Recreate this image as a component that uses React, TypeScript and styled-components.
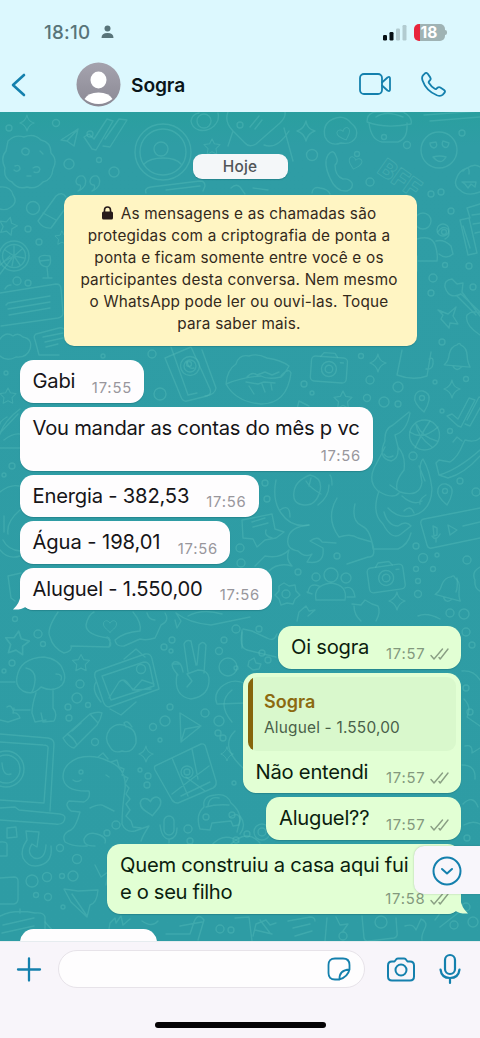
import React from 'react';
import styled, { createGlobalStyle } from 'styled-components';

const GlobalStyle = createGlobalStyle`
  * { box-sizing: border-box; }
  body { margin: 0; background: #f8f5fa; font-family: Inter, "Liberation Sans", sans-serif; }
`;

const ACCENT = '#1480ad';

const Screen = styled.div`
  width: 480px;
  height: 1038px;
  display: grid;
  grid-template-rows: 112px 829px 97px;
  overflow: hidden;
`;

/* ---------- header ---------- */
const Header = styled.header`
  background: #dcf8fe;
  display: flex;
  flex-direction: column;
`;
const StatusBar = styled.div`
  height: 57px;
  padding: 7px 34px 0 44px;
  display: flex;
  align-items: center;
`;
const Clock = styled.span`
  font-size: 18.8px;
  font-weight: 500;
  letter-spacing: 0.2px;
  color: #587479;
  width: 47px;
  white-space: nowrap;
`;
const PersonIcon = styled.svg`
  margin-left: 10px;
`;
const StatusIcons = styled.div`
  margin-left: auto;
  display: flex;
  align-items: center;
  gap: 7px;
`;
const Battery = styled.div`
  width: 31px;
  height: 17px;
  border-radius: 5px;
  background: linear-gradient(90deg, #e8253b 0 6.5px, #9fb3b4 6.5px);
  color: #fff;
  font-weight: 700;
  font-size: 15.5px;
  line-height: 17px;
  text-align: center;
`;
const BatteryTip = styled.div`
  width: 2px;
  height: 5px;
  margin-left: -6.5px;
  margin-right: -1px;
  border-radius: 0 2px 2px 0;
  background: #9fb3b4;
`;
const NavBar = styled.div`
  height: 55px;
  padding: 0 34px 0 11px;
  display: flex;
  align-items: center;
`;
const Avatar = styled.svg`
  margin-left: 50px;
`;
const ContactName = styled.h1`
  margin: 1px 0 0 10px;
  font-size: 19.2px;
  font-weight: 600;
  letter-spacing: -0.1px;
  color: #0a1519;
`;
const Calls = styled.div`
  margin-left: auto;
  margin-bottom: 1px;
  display: flex;
  align-items: center;
  gap: 30px;
`;

/* ---------- conversation ---------- */
const Chat = styled.main`
  display: grid;
  overflow: hidden;
  background: linear-gradient(#2a9f9f 0, #2f9da5 34px, #2e9ca4 100%);
  position: relative;
  & > * { grid-area: 1 / 1; }
`;
const Wallpaper = styled.svg`
  display: block;
`;
const Thread = styled.div`
  z-index: 1;
  height: 829px;
  overflow: hidden;
  padding: 41.5px 19.5px 0;
  display: flex;
  flex-direction: column;
`;
const DatePill = styled.div`
  flex: none;
  align-self: center;
  width: 95px;
  height: 25px;
  border-radius: 9px;
  background: #f4f7f9;
  color: #505558;
  font-size: 15.4px;
  font-weight: 500;
  letter-spacing: 0.2px;
  line-height: 25.5px;
  text-align: center;
  box-shadow: 0 1px 1px rgba(0, 60, 70, 0.25);
`;
const Notice = styled.div`
  flex: none;
  align-self: center;
  width: 353px;
  height: 151px;
  margin: 16px 0 14.4px;
  padding: 8px 2px 0 0;
  border-radius: 10px;
  background: #fff5c3;
  color: #33291b;
  text-align: center;
  box-shadow: 0 1px 1px rgba(0, 60, 70, 0.2);
`;
const NoticeLine = styled.div`
  height: 22.2px;
  line-height: 22.2px;
  font-size: 15.3px;
  letter-spacing: 0.21px;
  white-space: nowrap;
`;
const LockIcon = styled.svg`
  margin-right: 8px;
  vertical-align: -1px;
`;
const Bubble = styled.div<{ $out?: boolean; $w: number; $h: number; $gap?: number }>`
  position: relative;
  isolation: isolate;
  flex: none;
  align-self: ${p => (p.$out ? 'flex-end' : 'flex-start')};
  width: ${p => p.$w}px;
  height: ${p => p.$h}px;
  margin-bottom: ${p => p.$gap ?? 4}px;
  border-radius: 13.5px;
  background: ${p => (p.$out ? '#e2ffd4' : '#fefdfe')};
  color: ${p => (p.$out ? '#0b1e0e' : '#161518')};
  box-shadow: 0 1px 1px rgba(0, 60, 70, 0.22);
  padding: 0 13px;
  display: flex;
  flex-direction: column;
`;
const Line = styled.div<{ $ls?: number; $h?: number }>`
  height: ${p => p.$h ?? 42}px;
  line-height: ${p => p.$h ?? 42}px;
  font-size: 20.2px;
  letter-spacing: ${p => p.$ls ?? -0.24}px;
  white-space: nowrap;
`;
const Meta = styled.div<{ $out?: boolean }>`
  position: absolute;
  right: 12px;
  bottom: 5px;
  display: flex;
  align-items: center;
  gap: 4px;
  font-size: 14.8px;
  line-height: 20px;
  letter-spacing: 0.8px;
  color: ${p => (p.$out ? '#83987d' : '#98969c')};
`;
const Tail = styled.svg<{ $out?: boolean }>`
  position: absolute;
  z-index: -1;
  bottom: 0;
  ${p => (p.$out ? 'right: -7px; transform: scaleX(-1);' : 'left: -7px;')}
`;
const Quote = styled.div`
  margin: 4.5px -8px 0;
  height: 73.5px;
  border-radius: 9px;
  background: linear-gradient(90deg, #86650c 5.5px, #d9f8cc 5.5px);
  padding: 11px 0 0 16.5px;
`;
const QuoteName = styled.div`
  font-size: 18px;
  font-weight: 600;
  line-height: 28px;
  color: #8c6a10;
`;
const QuoteText = styled.div`
  font-size: 15.4px;
  line-height: 24px;
  letter-spacing: 0.2px;
  color: #495f49;
`;
const ScrollDown = styled.button`
  position: absolute;
  z-index: 2;
  right: 0;
  top: 734px;
  width: 66px;
  height: 48px;
  padding: 1px 1px 0 0;
  border: 0;
  border-radius: 10px 0 0 10px;
  background: #f8f6fb;
  box-shadow: 0 0 2px rgba(60, 80, 80, 0.35);
  display: grid;
  place-items: center;
`;

/* ---------- composer ---------- */
const Footer = styled.footer`
  background: #f8f5fa;
  border-top: 1px solid #e6ecef;
  display: flex;
  flex-direction: column;
  align-items: center;
`;
const Composer = styled.div`
  width: 100%;
  height: 54px;
  padding: 0 17px 0 15px;
  display: flex;
  align-items: center;
`;
const Input = styled.div`
  width: 307px;
  height: 38px;
  margin: 0 22px 0 16px;
  padding-right: 13px;
  border-radius: 19px;
  border: 1px solid #e7e3e9;
  background: #fefdfe;
  display: flex;
  align-items: center;
  justify-content: flex-end;
`;
const MicIcon = styled.svg`
  margin-left: 24px;
`;
const HomeIndicator = styled.div`
  width: 171px;
  height: 6px;
  margin-top: 26px;
  border-radius: 3px;
  background: #050305;
`;

const stroke = { fill: 'none', stroke: ACCENT, strokeWidth: 2, strokeLinecap: 'round', strokeLinejoin: 'round' } as const;

const Ticks = () => (
  <svg width="19" height="12" viewBox="0 0 19 12" fill="none" stroke="#8a9f84" strokeWidth="1.4" strokeLinecap="round" strokeLinejoin="round">
    <path d="M1 7.500 4 11 12.500 1M9 9.500 10.200 11 18 1" />
  </svg>
);

const Star = ({ x, y, r = 9, a = 0 }: { x: number; y: number; r?: number; a?: number }) => (
  <path transform={`translate(${x} ${y}) rotate(${a}) scale(${r / 10})`} d="M0-10 3-4 10-3 5 2 6 9 0 6-6 9-5 2-10-3-3-4Z" />
);
const Spark = ({ x, y, r = 9 }: { x: number; y: number; r?: number }) => (
  <path transform={`translate(${x} ${y}) scale(${r / 10})`} d="M0-10Q1-2 9 0Q2 2 0 10Q-2 2-9 0Q-2-2 0-10Z" />
);
const Heart = ({ x, y, r = 9, a = 0 }: { x: number; y: number; r?: number; a?: number }) => (
  <path transform={`translate(${x} ${y}) rotate(${a}) scale(${r / 10})`} d="M0 9C-4 5-11 1-9-5C-7-9-2-8 0-4C2-8 7-9 9-5C11 1 4 5 0 9Z" />
);
const Bell = ({ x, y, a = 0 }: { x: number; y: number; a?: number }) => (
  <path transform={`translate(${x} ${y}) rotate(${a})`} d="M-13 9Q-9 5-9-2Q-8-10-2-12Q0-15 2-12Q8-10 9-2Q10 5 13 9ZM-4 10Q0 15 4 10" />
);
const Camera = ({ x, y, a = 0 }: { x: number; y: number; a?: number }) => (
  <g transform={`translate(${x} ${y}) rotate(${a})`}>
    <rect x="-18" y="-11" width="36" height="25" rx="4" />
    <path d="M-9-11-6-15H5L8-11M11-6h3" />
    <circle r="7.5" cy="1" /><circle r="3.8" cy="1" />
  </g>
);
const Pin = ({ x, y }: { x: number; y: number }) => (
  <g transform={`translate(${x} ${y})`}>
    <path d="M2 12Q-9 3-7-4Q-5-10 1-9Q8-7 7 0Q6 6 2 12Z" /><circle r="2.5" cy="-2" />
  </g>
);
const Checks = ({ x, y }: { x: number; y: number }) => (
  <path transform={`translate(${x} ${y})`} d="M-20 5-15 3-9 8 2-13 8-11-6 16-9 15ZM0 9 12-14 18-12 3 15-2 13" />
);

const DOTS: [number, number, number][] = [
  [9, 128, 3], [56, 123, 3.5], [90, 134, 3], [69, 164, 5], [114, 172, 5], [99, 160, 2.5], [312, 155, 5.5], [357, 154, 2.5],
  [407, 145, 3.5], [370, 182, 4], [384, 137, 2.5], [441, 192, 3], [431, 194, 3], [451, 211, 3], [444, 232, 2.5], [33, 208, 6.5],
  [28, 229, 3], [39, 242, 3], [17, 281, 4], [28, 283, 3], [433, 278, 4], [431, 293, 3], [445, 265, 2.5], [469, 266, 3], [473, 287, 3],
  [442, 342, 3], [435, 382, 2], [466, 379, 2.5], [370, 380, 4], [361, 356, 2.5], [304, 384, 3], [312, 393, 2], [367, 398, 3.5],
  [384, 402, 5], [398, 404, 3], [398, 387, 5], [442, 411, 2], [450, 431, 2.5], [413, 456, 4], [460, 481, 3], [476, 492, 4],
  [12, 466, 3], [4, 475, 2], [6, 373, 2], [240, 548, 4], [241, 563, 4], [298, 572, 3], [337, 556, 3], [416, 546, 3], [423, 558, 4.5],
  [437, 555, 2], [467, 560, 4], [416, 569, 2.5], [433, 569, 2.5], [418, 581, 2.5], [418, 594, 3.5], [450, 613, 4], [464, 614, 5],
  [15, 619, 2.5], [38, 634, 4], [43, 644, 2.5], [12, 663, 3], [4, 671, 2], [80, 684, 4], [77, 698, 5], [68, 707, 3], [88, 705, 2.5],
  [69, 718, 3], [164, 647, 3], [172, 640, 3], [171, 651, 2], [224, 640, 3], [219, 651, 3.5], [228, 667, 9], [170, 707, 3], [165, 721, 5],
  [153, 727, 3.5], [205, 713, 4], [219, 721, 5], [218, 733, 3], [223, 738, 3], [160, 740, 2], [95, 742, 3.5], [140, 770, 2],
  [148, 776, 3], [147, 785, 3], [234, 783, 2], [60, 848, 3.5], [77, 859, 4.5], [47, 877, 4.5], [73, 876, 5], [62, 876, 2.5],
  [32, 881, 6], [36, 895, 2.5], [48, 897, 3.5], [63, 907, 2], [116, 825, 4], [107, 833, 3], [188, 829, 4], [190, 841, 3], [220, 929, 4],
  [231, 930, 3], [236, 840, 3], [247, 834, 3], [466, 632, 4], [472, 645, 3], [470, 712, 3], [466, 688, 3], [475, 850, 3], [467, 838, 3],
  [466, 907, 4], [473, 922, 5], [454, 925, 4], [343, 936, 4], [236, 668, 2], [262, 653, 3], [268, 660, 3], [236, 629, 4], [259, 629, 3],
  [152, 354, 4], [189, 364, 2.5], [103, 356, 2], [160, 394, 6], [240, 125, 3], [462, 133, 3], [267, 499, 3], [265, 483, 3],
];

const Doodles = () => (
  <Wallpaper width="480" height="829" viewBox="0 112 480 829" fill="none" stroke="#55bab9" strokeOpacity=".44" strokeWidth="1.4" strokeLinecap="round" strokeLinejoin="round">
    {DOTS.map(([x, y, r], i) => <circle key={i} cx={x} cy={y} r={r} />)}

    <Spark x={27} y={123} r={8} />
    <path d="M61 140 78 129 74 146 67 141ZM67 141 78 129" />
    <path d="M84 137 89 134 94 139 107 119 113 121 96 150 92 149ZM105 139 119 119 127 120 110 147 103 146" />
    <circle cx="163" cy="152" r="28" /><circle cx="163" cy="152" r="23" /><circle cx="161" cy="149" r="7" />
    <path d="M144 164Q150 158 163 158Q176 158 181 164" />
    <path d="M8 141Q15 134 24 137Q34 133 41 140Q51 142 51 153Q58 160 53 169Q52 180 43 182Q36 190 27 187Q18 190 12 182Q3 178 5 168Q0 158 6 151Z" />
    <path d="M22 150q3-4 7 0q1 5-4 5q-4-1-3-5M15 166q5-2 5 3q-3 4-6 1M33 168q5-3 7 1q-1 5-6 3M40 151l3 3M27 176h4" />
    <path d="M76 181q1-6 7-5q4 3 2 9q-3 5-7 6q4-3 2-6q-4 0-4-4M90 181q1-6 7-5q4 3 2 9q-3 5-7 6q4-3 2-6q-4 0-4-4" />
    <path d="M191 121q1-7 8-8M218 113q2 7-4 13q-7 6-15 4q-7-2-8-9" /><circle cx="204" cy="121" r="7" />
    <path d="M228 112q-4 10 5 19l12 12q4 5 11 1l24-21q6-6 5-11M284 128l9 33M233 131l-5 15M250 127l9-11M255 129l7-9M264 145q13 5 25-14" />
    <Star x={212} y={147} r={8} />
    <Spark x={306} y={131} r={10} />
    <path d="M325 137q-3-13 8-18q11-5 18 4q8 6 5 14q-4 8-15 6q-11 4-16-6Z" /><Heart x={344} y={134} r={7} a={-20} />
    <path d="M367 122q0-10 10-10h26q10 5 8 12M367 122q18 7 44 2M369 123q2 17 13 19h16q10-3 9-19M376 117q10-7 27 0" />
    <circle cx="439" cy="150" r="18" />
    <path d="M430 143l6-1q2 5-2 6q-4-1-4-5M443 141l6 2q-1 6-5 4q-3-2-1-6M433 157q7-2 13 0q-5 9-13 0M424 115l56-4M430 121l50-4" />
    <path d="M328 155q5-7 8 1q3 6-1 9q0 11 8 14q6-1 9 4q2 5-5 8q-11 1-17-13q-7-15-2-23Z" /><Heart x={355} y={163} r={7} a={15} />
    <text x="376" y="172" fontSize="25" fontWeight="800" fontFamily="Inter" transform="rotate(35 376 172)" strokeWidth="1">BFF</text>
    <path d="M456 180q2-9 11-12q8-5 13-1M480 192q-13 5-20-2q-6-4-4-10M463 171q7-7 6 3M462 182h14l-1 5-4-3-3 4-3-4Z" />

    <path d="M146 193q-2-5 5-6l49-6q5 0 5 5l-2 5M166 190l34-4M231 188q5-5 9-1l5 7M312 193q1-7 8-5q8 1 10 6M253 188l15 2" />
    <path d="M0 187q11-1 13 8q5 7-2 12q-5 4-11 2" />
    <path d="M38 221 56 196q6-5 10 1M38 221q5 8 13 7l16-22M43 213l13 7" />
    <Star x={8} y={226} r={9} a={15} /><Star x={62} y={238} r={7} />
    <circle cx="14" cy="256" r="15" /><circle cx="14" cy="256" r="11.5" />
    <path d="M14 256V246M14 256l8-7M14 256l10 2M14 256l6 9M14 256l-2 10M14 256l-9 5M14 256l-9-6M12 258-3 278M10 256-3 268" />
    <path d="M39 258q2-4 11-2q2 9-3 11q-8-1-8-9M47 267l1 10M43 278h9M40 261l9-1" />
    <path d="M0 293l56-9q5 0 5 5l2 24q0 4-5 5l-57 8M8 303l42-7M8 309l42-7M9 315l41-7M8 303l-2 2M5 289q2-4 6-4" />
    <path d="M36 334l23-6q4-1 6 2M36 334q-3 2-1 6l4 15h20M43 337l20-4M45 342l18-4M46 347l12-3" />
    <path d="M0 339q6-8 13-3q5-4 10 1q10 2 7 12q-3 9-14 8q-9 5-16-1" />
    <Star x={8} y={396} r={8} /><path d="M0 433l18-19M20 409q-16 12-20 25M4 440q9-7 16-6M0 448h20M7 417q-7 4-7 7" />
    <path d="M0 492q10-8 19-6M8 534q-2-12 12-24M3 540q5 10 17 11M0 550q8 10 20 6M8 576l13-3M8 576l3 22 4 3M4 516v16" />

    <circle cx="423" cy="221" r="8" /><path d="M417 239q16-5 19 9q2 8 1 13H417M438 232q4-7 10-3q3 7-3 10M436 241q8-2 15 5l2 8q-7 6-14 0M417 256v15" />
    <circle cx="443" cy="230" r="6" />
    <path d="M460 220l9-2 8 35-9 2ZM463 226l7 22M480 204l-13 4 3 10M480 214l-8 1M480 223l-7 1M480 232l-5 1" />
    <path d="M445 287q-1-7 7-8l5 5 6-1-1 9 18 24M445 287q4 13 16 7l19 18M457 296l19 19M467 315q-3 9 13 20M467 315q5-5 13-2" />
    <path d="M438 310l10 4 8-7-3 9 5 8-8-1-1 5-8-9 2-4Z" />
    <Bell x={458} y={357} a={5} />
    <Spark x={452} y={389} r={9} /><Checks x={467} y={411} />
    <circle cx="424.500" cy="435" r="15" />
    <path d="M410 432q12 9 28-5M416 424q1 12 16 23M430 421q-7 10-15 27M437 441q-15-4-20-16" />
    <path d="M436 463l3-3 11 2q8-5 13-18l2-4q10 3 15-2M436 463l3 12 9 3q16-4 32-22M439 475q18-5 41-25M453 442l4-5 5 4" />
    <Pin x={445} y={493} />
    <path d="M480 508l-56 11q-4 1-3 5l6 21q1 4 5 3l48-10M433 526l4 2v7l-3 1ZM432 536q4 6 8-2M436 538v4M448 525l9 5-7 5ZM463 526l17-4" />
    <Bell x={450} y={589} a={15} /><path d="M457 578q1 9-1 14" /><path d="M480 567q-9 5-5 13q-1 8 5 11" />

    <path d="M165 358l26-11 19 42q2 5-3 7l-20 5q-4 1-6-4Z" /><circle cx="190" cy="366" r="9.500" /><circle cx="190" cy="366" r="6" /><path d="M187 362q2 8 7 6" />
    <path d="M171 347l17 48M205 396q10-1 11-8l-14-38M188 395l9-2" />
    <path d="M226 384q1-14 10-20q3-10 13-8q8-3 18 2q14 2 22 8q-5 9-8 11q-13 3-20-1q-18 1-35 8ZM226 384q10 18 35 20q26 0 30-31q-2-6-10 3M247 377q5-6 10-2l8-3 7 3 7-3M246 382l12 2 6-2 11 1M249 386l5 8M262 384l3 8M271 384l1 6" />
    <Camera x={329} y={368} a={4} /><Spark x={378} y={363} r={9} /><Star x={343} y={400} r={9} /><path d="M297 409l2-8 10 5" />
    <path d="M402 350l-5 25q16 6 30 1l4-24M429 359q5-3 4 5q-1 6-7 5" /><Pin x={422} y={400} />

    <path d="M385 441q-1-12 8-16l16-13M385 441q-8 17 6 20q8-2 7-14l-3-12q12-4 15-22M398 447q8 9 6 23q-9 11-7 19M385 447q-6 12-11 21q-6 14 4 23q15 9 21 2M379 491q-8 22 4 33q9 17 18 10l10-8q-5-6-13 0q-10 0-14-14" />
    <path d="M390 485l10 7q20 6 22-10q-4-18 1-23q7 12 9 30q-1 24-22 27-13 2-22-8M402 496q11 10 20 5M384 454q3 5 9 2M419 466l6 15M426 495q-7 4-6 9M404 511q6-7 10 2" />
    <path d="M276 480q-4 20 5 33q10 15 28 12M294 492q1-11 16-17q13 3 10 16q-4 15-16 14q-12-1-10-13ZM306 481q4 7 15 13M311 478l-2 8M329 485q0 12-11 20M330 475q2 2 2 10M280 510q10-7 10 7M337 498q-12 20 2 39q12-4 19 1l14 4q5 16-4 15l-21 7M355 504q-4 17 7 22q9 4 11 23h25q10-4 13-16" />
    <path d="M309 525q-20 2-21 14q-2 10 10 12q7 7 14 3l-5 8q18 3 16-14l-13-7q8-6 12 1l14 1M242 520l30-6 3 15 9 3-8 6-11 2-8 7-4-8-10-1ZM252 522l13-4M253 527l15-4M266 530q-2 6 6 8" />
    <path d="M255 566l10-10q15 3 24-6q-4 9 3 16-14-4-23 5" />
    <circle cx="331" cy="575" r="7" /><circle cx="316" cy="577" r="4" /><circle cx="346" cy="578" r="5" />
    <path d="M316 600q-3-15 15-17q17 2 14 17ZM308 593q1-11 11-7M345 588q8-3 10 9h-8M312 594l-5-2" />
    <Camera x={386} y={577} a={-8} /><Spark x={397} y={601} r={9} />
    <path d="M284 583l5 3 6-1 1 6 4 4-5 4-2 5-6-1-6 2-2-6-4-4 4-4v-5Z" /><circle cx="286" cy="594" r="4" />
    <path d="M352 604l9 1 4-5 7 4 6 2q3 6-2 15M354 606q0 9 7 15M297 621l2-9 7-6 3 5 6-1-7 6M418 616q9-4 22 3" />

    <Star x={17} y={643} r={12} a={8} />
    <path d="M58 612q-12 18-8 25q3 11 14 16q9-2 7-7l38 1q4-2-1-9q-22-3-22-13q2-10 8-13M109 647q3-9-2-10M133 612q9 11 7 19q-16 1-25 9q1 7 9 6l16-7q6 2 15-1q2-4 6-13q9-4 4-12M147 613q2 7 8 7" />
    <Heart x={110} y={626} r={7} />
    <path d="M176 613q13 10 35 12l39-8M188 616q15-8 34-2M176 613l5 8-4 7-2-8" />
    <path d="M17 677q3-19 27-20q15 2 19 13q4 9-1 15q-9 8-21 2q-8 9-18 4q-8-5-6-14ZM26 668q10 2 9 13q-1 9-4 12M56 674q7 0 5 6M53 689v19q5 6 1 13l-11 1-2-9M36 693q-4 12-4 20l3 9 11-2M0 682h15M0 720l8 2 12-4q-2-6-7-5l1-5M14 710h16M7 707q4-3 6 3" />
    <Star x={81} y={663} r={8.500} />
    <path d="M97 671l48-17q6-1 7 5l7 30-50 18q-4 0-6-6l-8-24q-1-5 2-6ZM102 676l42-14q5 0 6 5l4 19-43 14ZM109 698l10-16q4-4 8 0l6 8 9-10 12 4M124 681l10 9 17-1M124 659l12-10 9 8M110 709l11 6 15-13M96 682q-5 8 5 20" /><circle cx="141" cy="669" r="4.500" />
    <path d="M188 672l-4-28q2-5 7-3l5 24M197 665l2-20q4-5 7 0l-2 28M178 675q-9-10-4-13q7-2 9 10M177 674q-4 22 14 25q19-3 18-21q-1-8-11-8l-11 4 5 7-5 6M172 664h8" />
    <path d="M217 704q-4-9 4-17q12-10 25-3M218 704l28-1M242 630v18" />
    <path d="M63 738l27-24q8-3 12-1q-1 6-5 12l-23 23q-6-1-11-10ZM67 734q6 3 10 11M90 714l8 9M72 731l9-8" />
    <path d="M128 727q-10-6-18 2q-7 9 0 18q4 7 12 4q10 3 14-8q1-13-8-16ZM126 727l-2-4q3-4 8 4" />
    <path d="M180 713l21 13-20 16ZM181 742l4-13 16-3" /><Spark x={146} y={754} r={8} /><Spark x={227} y={754} r={7} />
    <path d="M155 766l46-22q4-1 5 4l10 33q1 5-3 7l-35 15q-4 0-6-3l-17-30q-1-3 0-4ZM172 758l16 38M192 749l6 30M172 794l21-16 16-12M186 777l19 14M181 796l29-14" /><circle cx="187" cy="772" r="6" /><circle cx="187" cy="772" r="3" />
    <path d="M0 734l48 4q6 1 6 6l-4 67M0 742l43 3q6 0 5 4l-4 54-44-3M0 808l15-1 4 3 41 4q7 1 4 7-2 4-9 3l-55-4" /><circle cx="6" cy="769" r="18" /><circle cx="6" cy="769" r="14" /><path d="M2 763q1 14 9 11" />
    <path d="M89 791q-25 1-26-14q0-13 15-19q16-4 30 3q19 7 17 28q-3 20-3 35 4 9 13 7l14-5q-6 9-8 15M89 791q2 7-5 11l-15-1q-5 4 2 10l9 1q-4 15-9 18-10 4-6 12 8 5 22 4M90 808q10-5 14-2l10 5M95 846q-12 0-11-7 4-9 16-4 7 3 5 8M98 757l5-4 5 6M111 762l6-2 2 7 5 2-2 6 6 3-3 6 4 4-3 6 4 5-4 5 4 6-4 6 5 5 2 6 8 1M73 780q4 3 8 0" /><circle cx="81" cy="772" r="2" /><path d="M106 775l3 2" />
    <Heart x={151} y={806} r={11} a={-8} />
    <path d="M200 829q-5-14 4-22q-2-11 11-12q12-2 16 8q12 10 8 22l-6 1-2-5-19 2-2 7ZM206 807q10-3 23-2M208 806q1-10 11-8" /><circle cx="206" cy="817" r="3" /><circle cx="232" cy="815" r="3" />
    <rect x="164" y="816" width="10" height="19" rx="5" /><path d="M160 825q2 15 10 14q7-1 7-11M169 839v4M7 828l9-1 1 10-10 1ZM0 842q8-1 7 4v10H0" />
    <path d="M27 840q-7 10-4 18q6 11 18 7q12-4 10-19M27 840l-1-9 13 1-2 15-5-3q-6 9 2 14 11 3 12-13" />
    <path d="M0 878l14-1q4 0 4 4v18q0 4-4 5H0M0 916q14-7 35-3 9-1 10 4v12M3 925l31-7M2 933l32-7M20 913v-4M64 889l14 2 20-1q-1 13-8 15l-3 12-16-15ZM72 894l15 22" />
    <path d="M45 922q10 12 12 10M107 941l3-18 5-5 1 5 5-7 2 9 7-6M95 865l6 12 7-5-2 13M142 921q10 7 16 0M180 926l22-4M166 934h24l4-12q4-10 10-2l-6 20M235 918l14-1 3 24M211 846q13-15 28-4" />

    <path d="M243 629l9 2 15 7q7 4 10-4M242 632q-3 16 5 18l29 7" /><path d="M249 661l5-3 2 5 5 1-2 5-6 1-5-4Z" />
    <path d="M232 690q-16 13 0 32M235 731q-16 15 8 37M462 671q12-1 18 9M464 699q8 8 3 18l13 9M465 746q8-2 7 7l8-5M462 765q14 0 13 14" />
    <path d="M230 817q9-6 10 3l-3 12M240 816q7 9 0 18M463 804q10-10 15 3M464 825q9-5 16-1M230 845q17-17 30-2" />
    <circle cx="262" cy="832" r="8" /><circle cx="262" cy="832" r="4" />
    <path d="M288 921l22-4q5 0 5 4M293 928l17-4M295 936l17-5M327 918l-2 23M336 917l4 8 8-1-5 7M362 916l2 22q1 4 5 3l25-3q4-1 3-6l-1-14" /><circle cx="381" cy="922" r="6" /><path d="M405 926q8-3 11 4l5-11q7 3 4 9-4 8-3 12M253 936l3-12 10-4 4 5 6-2M255 930l17 4M260 920l10 13M435 920l6-8M440 927l18-14" />
  </Wallpaper>
);

const TailShape = ({ out }: { out?: boolean }) => (
  <Tail $out={out} width="22" height="22" viewBox="0 0 22 22">
    <path d="M7.500 0V7Q7 15 0 21.500Q8 22 12.500 19Q16 22 22 22V0Z" fill={out ? '#e2ffd4' : '#fefdfe'} />
  </Tail>
);
const Incoming = ({ w, h = 42.5, gap = 4, ls, text, time, tail }: { w: number; h?: number; gap?: number; ls?: number; text: string; time: string; tail?: boolean }) => (
  <Bubble $w={w} $h={h} $gap={gap}>
    {tail && <TailShape />}
    <Line $ls={ls}>{text}</Line>
    <Meta>{time}</Meta>
  </Bubble>
);
const OutMeta = ({ time }: { time: string }) => <Meta $out>{time}<Ticks /></Meta>;

export default function App() {
  return (
    <Screen>
      <GlobalStyle />
      <Header>
        <StatusBar>
          <Clock>18:10</Clock>
          <PersonIcon width="13" height="14" viewBox="0 0 13 14" fill="#587479">
            <circle cx="6.500" cy="3.500" r="3" />
            <path d="M.5 13Q.5 8 6.500 8T12.500 13Z" />
          </PersonIcon>
          <StatusIcons>
            <svg width="24" height="17" viewBox="0 0 24 17">
              <rect x="0" y="11" width="4" height="5.500" rx="1.200" fill="#061014" />
              <rect x="6.500" y="8" width="4" height="8.500" rx="1.200" fill="#061014" />
              <rect x="13" y="4.500" width="4" height="12" rx="1.200" fill="#b2cbd0" />
              <rect x="19.500" y="1" width="4" height="15.500" rx="1.200" fill="#b2cbd0" />
            </svg>
            <Battery>18</Battery>
            <BatteryTip />
          </StatusIcons>
        </StatusBar>
        <NavBar>
          <svg width="15" height="24" viewBox="0 0 15 24" {...stroke} strokeWidth={2.6}><path d="M13 2 2 12 13 22" /></svg>
          <Avatar width="45" height="45" viewBox="0 0 45 45">
            <defs>
              <linearGradient id="avatar" x1="0" y1="0" x2="0" y2="1"><stop offset="0" stopColor="#a5a3ae" /><stop offset="1" stopColor="#8b8994" /></linearGradient>
            </defs>
            <circle cx="22.500" cy="22.500" r="22" fill="url(#avatar)" />
            <ellipse cx="22.500" cy="18" rx="8" ry="8.500" fill="#fff" />
            <path d="M8.500 37Q12 30.500 22.500 30.500T36.500 37Q30 42 22.500 42T8.500 37Z" fill="#fff" />
          </Avatar>
          <ContactName>Sogra</ContactName>
          <Calls>
            <svg width="32" height="22" viewBox="0 0 32 22" {...stroke} strokeWidth={1.8}>
              <rect x="1" y="1" width="22" height="20" rx="4" />
              <path d="M23 9.500 28.500 4.500Q31 3 31 5.500V16.500Q31 19 28.500 17.500L23 12.500" />
            </svg>
            <svg width="25" height="25" viewBox="0 0 26 26" {...stroke} strokeWidth={1.9}>
              <path d="M2.300 3.200 4.200 1.400Q5.700.3 7 1.900L9.600 5.600Q10.600 7.100 9.500 8.400L8.300 9.800Q7.700 10.500 8.300 11.500Q10.600 15.200 14.300 17.500Q15.300 18.100 16 17.400L17.500 16.200Q18.700 15.300 20.100 16.200L24 18.800Q25.600 20 24.500 21.500L22.700 23.600Q20.500 25.700 16.500 24.200Q5.300 19.500 1.600 8.800Q.4 5.200 2.300 3.200Z" />
            </svg>
          </Calls>
        </NavBar>
      </Header>

      <Chat>
        <Doodles />
        <Thread>
          <DatePill>Hoje</DatePill>
          <Notice>
            <NoticeLine>
              <LockIcon width="11" height="14" viewBox="0 0 11 14"><rect y="5.500" width="11" height="8" rx="1.500" fill="#271b1b" /><path d="M2.500 7V4a3 3 0 0 1 6 0V7" fill="none" stroke="#271b1b" strokeWidth="1.600" /></LockIcon>
              As mensagens e as chamadas são
            </NoticeLine>
            <NoticeLine>protegidas com a criptografia de ponta a</NoticeLine>
            <NoticeLine>ponta e ficam somente entre você e os</NoticeLine>
            <NoticeLine>participantes desta conversa. Nem mesmo</NoticeLine>
            <NoticeLine>o WhatsApp pode ler ou ouvi-las. Toque</NoticeLine>
            <NoticeLine>para saber mais.</NoticeLine>
          </Notice>

          <Incoming w={124.5} h={43} text="Gabi" time="17:55" />
          <Incoming w={353.5} h={64} text="Vou mandar as contas do mês p vc" time="17:56" />
          <Incoming w={239} text="Energia - 382,53" time="17:56" ls={-0.2} />
          <Incoming w={210.5} text="Água - 198,01" time="17:56" ls={-0.1} />
          <Incoming w={252.5} gap={15.6} text="Aluguel - 1.550,00" time="17:56" ls={-0.2} tail />

          <Bubble $out $w={182.5} $h={43} $gap={4}>
            <Line>Oi sogra</Line>
            <OutMeta time="17:57" />
          </Bubble>
          <Bubble $out $w={218} $h={120.5} $gap={3.5}>
            <Quote>
              <QuoteName>Sogra</QuoteName>
              <QuoteText>Aluguel - 1.550,00</QuoteText>
            </Quote>
            <Line>Não entendi</Line>
            <OutMeta time="17:57" />
          </Bubble>
          <Bubble $out $w={194.5} $h={43} $gap={4}>
            <Line>Aluguel??</Line>
            <OutMeta time="17:57" />
          </Bubble>
          <Bubble $out $w={353.5} $h={70} $gap={15}>
            <TailShape out />
            <Line $h={42}>Quem construiu a casa aqui fui</Line>
            <Line $h={12} $ls={-0.34}>e o seu filho</Line>
            <OutMeta time="17:58" />
          </Bubble>
          <Bubble $w={137.5} $h={43} />
        </Thread>
        <ScrollDown aria-label="scroll">
          <svg width="30" height="30" viewBox="0 0 30 30" {...stroke}><circle cx="15" cy="15" r="13.500" /><path d="M10 13 15 17.500 20 13" /></svg>
        </ScrollDown>
      </Chat>

      <Footer>
        <Composer>
          <svg width="27" height="27" viewBox="0 0 27 27" {...stroke} strokeWidth={2.3}><path d="M14 2.500V24.500M3 13.500H25" /></svg>
          <Input>
            <svg width="24" height="24" viewBox="0 0 24 24" {...stroke} strokeWidth={1.8}>
              <path d="M12.500 22.500H8Q1.500 22.500 1.500 16V8Q1.500 1.500 8 1.500H16Q22.500 1.500 22.500 8V12.500Q21 19.500 12.500 22.500Q12 13 22.500 12.500" />
            </svg>
          </Input>
          <svg width="28" height="25" viewBox="0 0 28 25" {...stroke}>
            <path d="M5 4.500H7.500L9.500 2Q10 1.500 11 1.500H17Q18 1.500 18.500 2L20.500 4.500H23Q27 4.500 27 8.500V19.500Q27 23.500 23 23.500H5Q1 23.500 1 19.500V8.500Q1 4.500 5 4.500Z" />
            <circle cx="14" cy="13" r="5.500" />
          </svg>
          <MicIcon width="22" height="32" viewBox="0 0 22 32" {...stroke} strokeWidth={2.2}>
            <rect x="6" y="2" width="10" height="19" rx="5" /><path d="M1.500 16.500Q2.500 25 11 25T20.500 16.500M11 25V30" />
          </MicIcon>
        </Composer>
        <HomeIndicator />
      </Footer>
    </Screen>
  );
}
